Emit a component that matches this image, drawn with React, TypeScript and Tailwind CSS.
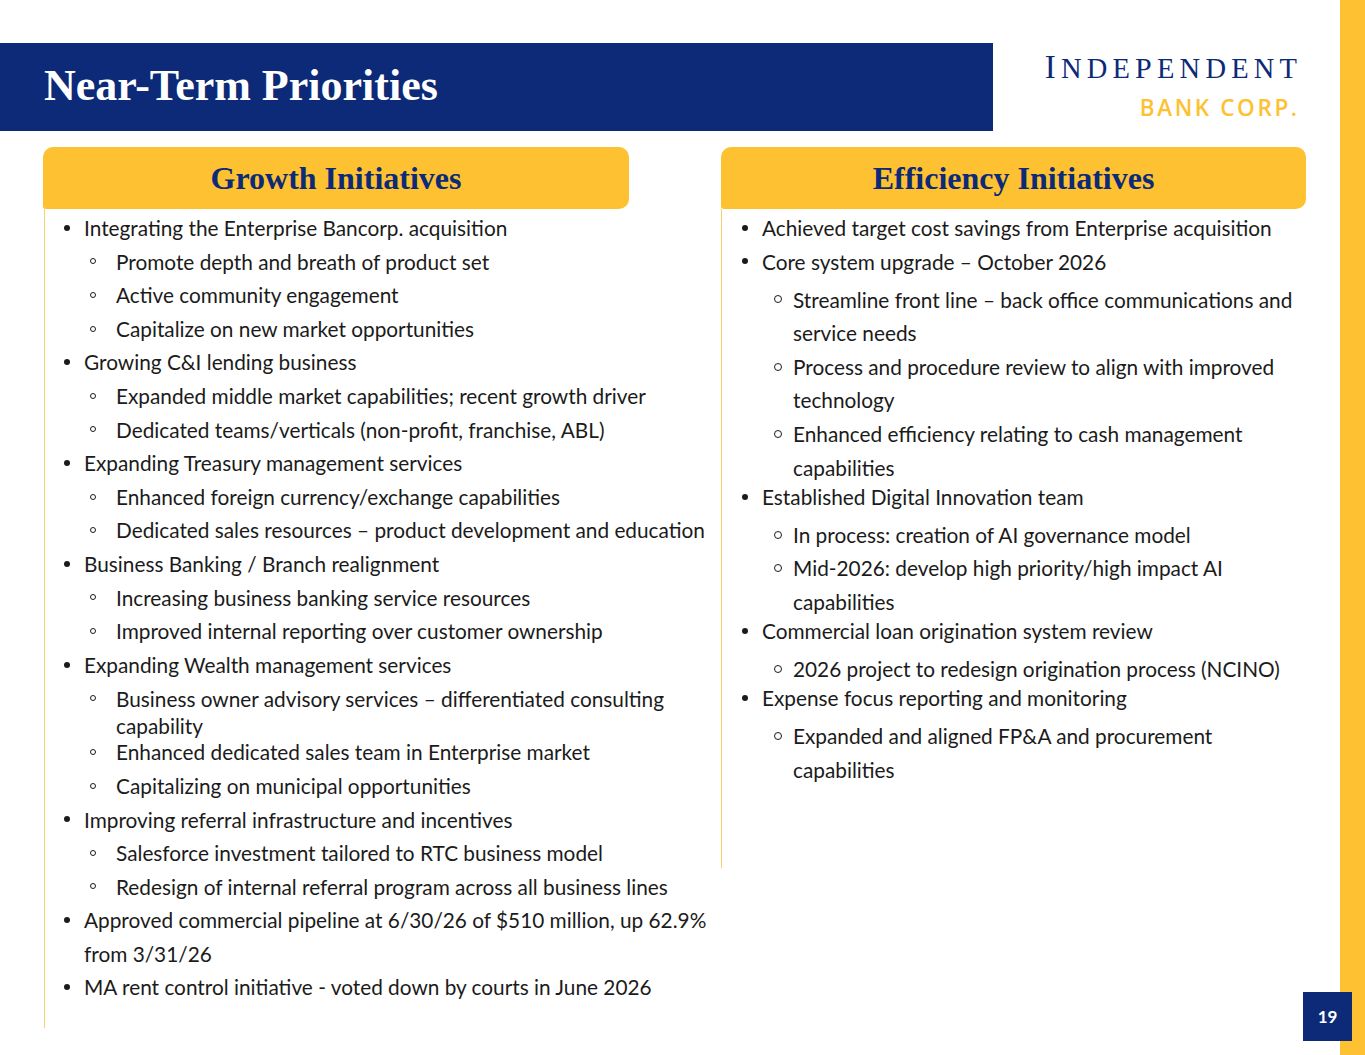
import React from 'react'

type Item = {
  lines: string[]
  sub?: boolean
  tight?: boolean
}

const growth: Item[] = [
  { lines: ['Integrating the Enterprise Bancorp. acquisition'] },
  { lines: ['Promote depth and breath of product set'], sub: true },
  { lines: ['Active community engagement'], sub: true },
  { lines: ['Capitalize on new market opportunities'], sub: true },
  { lines: ['Growing C&I lending business'] },
  { lines: ['Expanded middle market capabilities; recent growth driver'], sub: true },
  { lines: ['Dedicated teams/verticals (non-profit, franchise, ABL)'], sub: true },
  { lines: ['Expanding Treasury management services'] },
  { lines: ['Enhanced foreign currency/exchange capabilities'], sub: true },
  { lines: ['Dedicated sales resources \u2013 product development and education'], sub: true },
  { lines: ['Business Banking / Branch realignment'] },
  { lines: ['Increasing business banking service resources'], sub: true },
  { lines: ['Improved internal reporting over customer ownership'], sub: true },
  { lines: ['Expanding Wealth management services'] },
  {
    lines: ['Business owner advisory services \u2013 differentiated consulting', 'capability'],
    sub: true,
    tight: true,
  },
  { lines: ['Enhanced dedicated sales team in Enterprise market'], sub: true },
  { lines: ['Capitalizing on municipal opportunities'], sub: true },
  { lines: ['Improving referral infrastructure and incentives'] },
  { lines: ['Salesforce investment tailored to RTC business model'], sub: true },
  { lines: ['Redesign of internal referral program across all business lines'], sub: true },
  { lines: ['Approved commercial pipeline at 6/30/26 of $510 million, up 62.9%', 'from 3/31/26'] },
  { lines: ['MA rent control initiative - voted down by courts in June 2026'] },
]

type Group = { lines: string[]; subs?: string[][] }

const efficiency: Group[] = [
  { lines: ['Achieved target cost savings from Enterprise acquisition'] },
  {
    lines: ['Core system upgrade \u2013 October 2026'],
    subs: [
      ['Streamline front line \u2013 back office communications and', 'service needs'],
      ['Process and procedure review to align with improved', 'technology'],
      ['Enhanced efficiency relating to cash management', 'capabilities'],
    ],
  },
  {
    lines: ['Established Digital Innovation team'],
    subs: [
      ['In process: creation of AI governance model'],
      ['Mid-2026: develop high priority/high impact AI', 'capabilities'],
    ],
  },
  {
    lines: ['Commercial loan origination system review'],
    subs: [['2026 project to redesign origination process (NCINO)']],
  },
  {
    lines: ['Expense focus reporting and monitoring'],
    subs: [['Expanded and aligned FP&A and procurement', 'capabilities']],
  },
]

const Dot = () => <span className="block w-[6px] h-[6px] rounded-full bg-[#1b1b1b]" />

const Header = ({ title }: { title: string }) => (
  <div className="h-[62px] bg-[#fdc132] rounded-[10px] rounded-bl-[3px] flex items-center justify-center">
    <span className="font-['Liberation_Serif',serif] font-bold text-[32px] text-[#0c2a77] leading-none">{title}</span>
  </div>
)

const GrowthRow = ({ item }: { item: Item }) => {
  const lh = item.tight ? 'leading-[27px]' : 'leading-[33.6px]'
  return (
    <div className={`flex ${item.tight ? 'mt-[3.3px] mb-[-3.3px]' : ''}`}>
      <div
        className={`shrink-0 flex items-center ${item.sub ? 'w-[71px] pl-[45px]' : 'w-[39px] pl-[19px]'} ${
          item.tight ? 'h-[27px]' : 'h-[33.6px]'
        }`}
      >
        {item.sub ? (
          <span className="block w-[6px] h-[6px] rounded-full border border-[#1b1b1b]" />
        ) : (
          <Dot />
        )}
      </div>
      <div className={`shrink-0 ${lh}`}>
        {item.lines.map((l) => (
          <div key={l} className="whitespace-nowrap">
            {l}
          </div>
        ))}
      </div>
    </div>
  )
}

export default function App() {
  return (
    <div className="flex w-[1365px] h-[1055px] bg-white font-['Lato',sans-serif] text-[#1b1b1b] overflow-hidden">
      <div className="relative flex-1 flex flex-col">
        <div className="mt-[43px] flex h-[88px]">
          <div className="w-[993px] bg-[#0c2a77] flex items-center pl-[44px]">
            <h1 className="font-['Liberation_Serif',serif] font-bold text-[44px] text-white leading-none mt-[-2px]">
              Near-Term Priorities
            </h1>
          </div>
          <div className="flex-1 flex flex-col items-end pr-[43px] pt-[8px]">
            <div className="font-['Liberation_Serif',serif] text-[#0c2a77] tracking-[5.2px] leading-none whitespace-nowrap mr-[-5.2px]">
              <span className="text-[33px]">I</span>
              <span className="text-[28.5px]">NDE</span>
              <span className="text-[30px]">P</span>
              <span className="text-[28.5px]">ENDENT</span>
            </div>
            <div className="font-['Open_Sans',sans-serif] font-semibold text-[22.5px] text-[#fdc132] tracking-[2.6px] leading-none mt-[13px] mr-[-2.6px] whitespace-nowrap">
              BANK CORP.
            </div>
          </div>
        </div>

        <div className="flex pl-[43px] pr-[34px] mt-[16px] justify-between">
          <div className="w-[586px] shrink-0">
            <Header title="Growth Initiatives" />
            <div className="h-[819px] border-l border-[#f6cf6e] ml-[1px] pt-[2px] text-[20.8px]">
              {growth.map((item, i) => (
                <GrowthRow key={i} item={item} />
              ))}
            </div>
          </div>

          <div className="w-[585px] shrink-0">
            <Header title="Efficiency Initiatives" />
            <div className="h-[659px] border-l border-[#f6cf6e] pt-[2px] text-[20.8px] leading-[33.6px]">
              {efficiency.map((g, i) => (
                <div key={i}>
                  <div className="flex">
                    <div className="shrink-0 w-[40px] h-[33.6px] flex items-center pl-[20px]">
                      <Dot />
                    </div>
                    <div className="whitespace-nowrap">{g.lines[0]}</div>
                  </div>
                  {g.subs && (
                    <div className="mt-[4.5px] mb-[-4.5px]">
                      {g.subs.map((s, j) => (
                        <div key={j} className="flex">
                          <div className="shrink-0 w-[71px] h-[33.6px] flex items-center pl-[52px]">
                            <span className="block w-[8px] h-[8px] rounded-full border-[1.5px] border-[#1b1b1b]" />
                          </div>
                          <div>
                            {s.map((l) => (
                              <div key={l} className="whitespace-nowrap">
                                {l}
                              </div>
                            ))}
                          </div>
                        </div>
                      ))}
                    </div>
                  )}
                </div>
              ))}
            </div>
          </div>
        </div>

        <div className="absolute left-[1303px] top-[992px] w-[49px] h-[49px] bg-[#0c2a77] flex items-center justify-center z-10">
          <span className="text-white font-bold text-[17px] font-['Lato',sans-serif]">19</span>
        </div>
      </div>
      <div className="w-[25px] bg-[#fdc132]" />
    </div>
  )
}
